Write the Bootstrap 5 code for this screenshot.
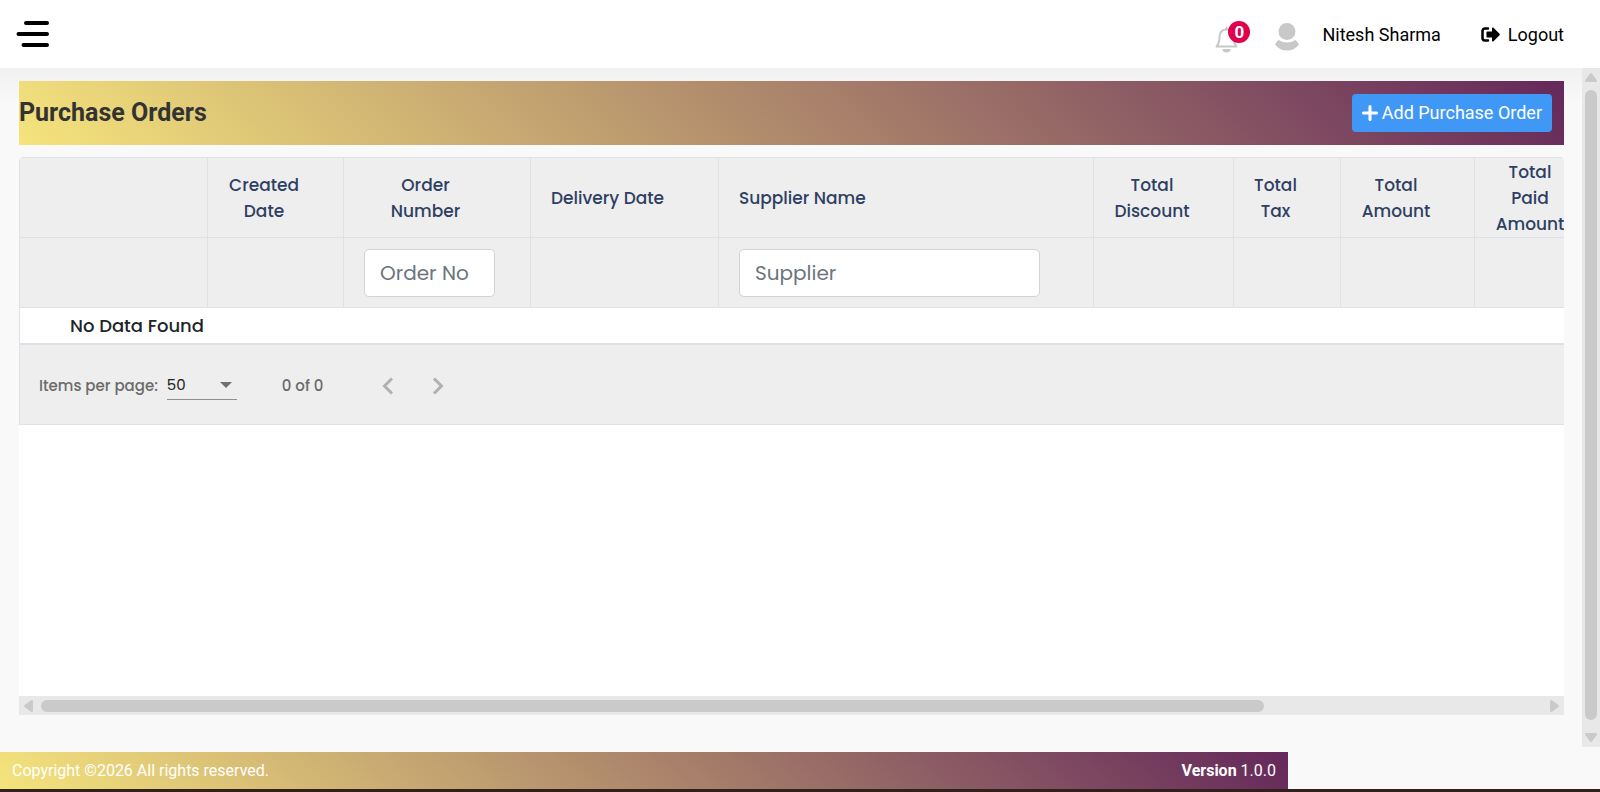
<!DOCTYPE html>
<html lang="en">
<head>
<meta charset="utf-8">
<meta name="viewport" content="width=device-width, initial-scale=1">
<title>Purchase Orders</title>
<link href="https://cdn.jsdelivr.net/npm/bootstrap@5.3.0/dist/css/bootstrap.min.css" rel="stylesheet">
<style>
  :root { --brand-gradient: linear-gradient(45deg, #f5e47c, #64285b); --line: #dee2e6; --cell: #eeeeee; }
  body { font-family: Roboto, "Liberation Sans", sans-serif; font-size: 18px; line-height: 26px; color: #000; background: #f9f9f9; }
  .topbar { height: 68px; background: #fff; padding: 0 36px 0 16px; }
  .topbar a { color: #000; text-decoration: none; }
  .account { padding-top: 2px; }
  .bell { width: 36px; height: 32px; position: relative; margin: 4px 24px 0 0; }
  .bell-count { position: absolute; left: 13px; top: 0; width: 22px; height: 22px; border-radius: 50%; background: #e0004d; color: #fff; font-size: 17px; font-weight: 700; line-height: 22px; text-align: center; }
  .user-name { margin: 0 40px 0 23px; }
  .workspace { background: linear-gradient(#f1f1f1, #f9f9f9 36px); min-height: 0; }
  .page-area { min-width: 0; padding: 13px 18px 37px 19px; }
  .title-bar { background: var(--brand-gradient); height: 64px; padding-right: 12px; margin-bottom: 12px; }
  .title-bar h1 { font-size: 25px; font-weight: 700; line-height: 32px; color: #333; }
  .btn-add { background: #3f98f5; color: #fff; font-size: 18px; line-height: 26px; padding: 6px 10px; border: 0; border-radius: 4px; }
  .btn-add:hover { background: #2f86e0; color: #fff; }
  .grid-box { background: #fff; border-radius: 4px 4px 0 0; font-family: Poppins, Inter, sans-serif; }
  .orders { width: 1898px; table-layout: fixed; border-collapse: separate; border-spacing: 0; border-left: 1px solid var(--line); border-top: 1px solid var(--line); border-radius: 4px 0 0 0; }
  .orders th, .orders thead td { background: var(--cell); border-right: 1px solid var(--line); border-bottom: 1px solid var(--line); padding: 0 43px 0 20px; vertical-align: middle; }
  .orders th { height: 80px; font-size: 17px; font-weight: 500; color: #2f3f64; text-align: center; }
  .orders th.start { text-align: left; white-space: nowrap; }
  .orders thead td { height: 70px; padding-right: 0; }
  .orders tbody td { height: 37px; padding: 0 0 0 50px; font-size: 18px; font-weight: 500; color: #212529; border-bottom: 2px solid var(--line); }
  .filter-input { height: 48px; padding: 0 15px; font-size: 20px; border: 1px solid #ced4da; border-radius: 5px; color: #212529; }
  .filter-input::placeholder { color: #6c757d; }
  .filter-order { width: 131px; }
  .filter-supplier { width: 301px; }
  .pager { width: 1898px; height: 80px; background: var(--cell); border-left: 1px solid var(--line); border-bottom: 1px solid var(--line); padding: 2px 0 0 19px; font-size: 15px; font-weight: 500; color: #6b6b6b; }
  .size-select { width: 70px; height: 28px; margin: 0 45px 0 9px; padding: 0; border: 0; border-bottom: 1px solid #8f8f8f; border-radius: 0; font-size: 15px; color: #212121; appearance: none; background: url("data:image/svg+xml,%3Csvg xmlns='http://www.w3.org/2000/svg' viewBox='0 0 12 6'%3E%3Cpath d='M0 0h12L6 6z' fill='%23707070'/%3E%3C/svg%3E") no-repeat right 5px center / 12px 6px; }
  .page-nav { margin-left: 40px; }
  .page-btn { background: none; border: 0; padding: 0; width: 50px; height: 32px; }
  .rail { background: #e8e8e8; }
  .rail-x { height: 19px; padding: 0 5px; }
  .rail-y { width: 18px; padding: 5px 0; margin-bottom: 5px; }
  .rail-x .track { margin: 0 18px 0 8px; }
  .rail-y .track { margin: 8px 0 13px; }
  .rail-thumb { background: #cacaca; border-radius: 6px; }
  .rail-x .rail-thumb { height: 12px; width: 82%; }
  .rail-y .rail-thumb { width: 12px; height: 100%; }
  .site-footer { background: var(--brand-gradient); height: 37px; margin-right: 312px; padding: 0 12px; font-size: 16px; color: #fff; }
  .edge { height: 3px; background: #32201a; }
</style>
</head>
<body class="d-flex flex-column vh-100 overflow-hidden">
<header class="topbar d-flex align-items-center flex-shrink-0">
  <button class="btn p-0 border-0 d-flex" type="button" aria-label="Toggle menu">
    <svg width="34" height="28" viewBox="0 0 34 28" fill="none" stroke="#000" stroke-width="4" stroke-linecap="round"><path d="M10 3h21M2.500 14H31M7.500 25H31"/></svg>
  </button>
  <div class="account ms-auto d-flex align-items-center">
    <a href="#" class="bell" aria-label="Notifications">
      <svg width="24" height="32" viewBox="0 0 24 32"><path d="M1.500 25.500C4 22.500 4.500 20 4.500 16c0-4.500 2.500-7.500 7-7.500s7 3 7 7.500c0 4 .5 6.500 3 9.500z" fill="none" stroke="#c8c8c8" stroke-width="2" stroke-linejoin="round"/><path d="M10 9V7.500a1.500 1.500 0 0 1 3 0V9zM7.500 28h8a4 3.500 0 0 1-8 0z" fill="#c8c8c8"/></svg>
      <span class="bell-count">0</span>
    </a>
    <svg width="24" height="28" viewBox="0 0 24 28" fill="#c8c8c8" aria-hidden="true" class="mt-1"><circle cx="12" cy="8.500" r="8.500"/><path d="M3.500 17q8.500 5 17 0 2 1.500 3.500 4.500-4.500 6-12 6T0 21.500Q1.500 18.500 3.500 17z"/></svg>
    <a href="#" class="user-name">Nitesh Sharma</a>
    <a href="#" class="d-flex align-items-center">
      <svg width="19" height="16" viewBox="0 0 19 16" class="me-1" aria-hidden="true"><path d="M7 1.500H4A2.500 2.500 0 0 0 1.500 4v7A2.500 2.500 0 0 0 4 13.500h3" fill="none" stroke="#000" stroke-width="2.500" stroke-linecap="round"/><path d="M5.500 5.200q0-.7.700-.7H11V1.200q.3-1.200 1.500-.5l6 6q.7.800 0 1.600l-6 6q-1.200.7-1.500-.5v-3.300H6.200q-.7 0-.7-.7z"/></svg>
      <span class="ps-1">Logout</span></a>
  </div>
</header>

<div class="workspace d-flex flex-grow-1">
  <main class="page-area flex-grow-1 d-flex flex-column">
    <div class="title-bar d-flex align-items-center justify-content-between flex-shrink-0">
      <h1 class="m-0">Purchase Orders</h1>
      <button type="button" class="btn btn-add d-flex align-items-center gap-1">
        <svg width="16" height="16" viewBox="0 0 16 16" aria-hidden="true"><path d="M8 1.500v13M1.500 8h13" stroke="#fff" stroke-width="3" stroke-linecap="round"/></svg>Add Purchase Order</button>
    </div>
    <div class="grid-box flex-grow-1 overflow-hidden">
      <table class="orders">
        <colgroup><col style="width:188px"><col style="width:136px"><col style="width:187px"><col style="width:188px"><col style="width:375px"><col style="width:140px"><col style="width:107px"><col style="width:134px"><col style="width:134px"><col></colgroup>
        <thead>
          <tr><th></th><th>Created Date</th><th>Order<br>Number</th><th class="start">Delivery Date</th><th class="start">Supplier Name</th><th>Total Discount</th><th>Total Tax</th><th>Total Amount</th><th>Total Paid Amount</th><th></th></tr>
          <tr><td></td><td></td><td><input class="filter-input filter-order" type="text" placeholder="Order No" aria-label="Order No"></td><td></td><td><input class="filter-input filter-supplier" type="text" placeholder="Supplier" aria-label="Supplier"></td><td></td><td></td><td></td><td></td><td></td></tr>
        </thead>
        <tbody><tr><td colspan="10">No Data Found</td></tr></tbody>
      </table>
      <div class="pager d-flex align-items-center">
        <label for="page-size">Items per page:</label>
        <select id="page-size" class="size-select"><option>50</option></select>
        <span>0 of 0</span>
        <div class="d-flex page-nav">
          <button class="page-btn" type="button" aria-label="Previous page" disabled><svg width="12" height="18" viewBox="0 0 12 18" fill="none" stroke="#b0b0b0" stroke-width="3"><path d="M10 1.500 2.500 9l7.500 7.500"/></svg></button>
          <button class="page-btn" type="button" aria-label="Next page" disabled><svg width="12" height="18" viewBox="0 0 12 18" fill="none" stroke="#b0b0b0" stroke-width="3"><path d="M2 1.500 9.500 9 2 16.500"/></svg></button>
        </div>
      </div>
    </div>
    <div class="rail rail-x d-flex align-items-center flex-shrink-0" aria-hidden="true">
      <svg width="9" height="12" viewBox="0 0 9 12" fill="#cacaca"><path d="M9 1v10q-.5 1.500-2 .7L.6 7Q-.4 6 .6 5L7 .3Q8.500-.5 9 1z"/></svg>
      <div class="track flex-grow-1"><div class="rail-thumb"></div></div>
      <svg width="9" height="12" viewBox="0 0 9 12" fill="#cacaca"><path d="M0 1v10q.5 1.500 2 .7L8.400 7q1-1 0-2L2 .3Q.5-.5 0 1z"/></svg>
    </div>
  </main>
  <div class="rail rail-y d-flex flex-column align-items-center flex-shrink-0" aria-hidden="true">
    <svg width="12" height="9" viewBox="0 0 12 9" fill="#cacaca"><path d="M1 9h10q1.500-.5.700-2L7 .6Q6-.4 5 .6L.3 7Q-.5 8.500 1 9z"/></svg>
    <div class="track flex-grow-1"><div class="rail-thumb"></div></div>
    <svg width="12" height="9" viewBox="0 0 12 9" fill="#cacaca"><path d="M1 0h10q1.500.5.700 2L7 8.400q-1 1-2 0L.3 2Q-.5.5 1 0z"/></svg>
  </div>
</div>

<footer class="site-footer d-flex align-items-center justify-content-between flex-shrink-0">
  <span>Copyright ©2026 All rights reserved.</span>
  <span><b>Version</b> 1.0.0</span>
</footer>
<div class="edge flex-shrink-0"></div>
<script src="https://cdn.jsdelivr.net/npm/bootstrap@5.3.0/dist/js/bootstrap.bundle.min.js"></script>
</body>
</html>
